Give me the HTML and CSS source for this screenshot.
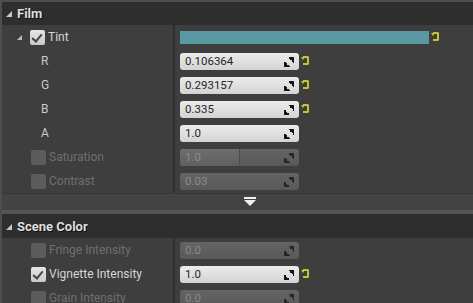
FILE: index.html
```html
<!DOCTYPE html>
<html lang="en">
<head>
    <meta charset="UTF-8">
    <title>Details - Post Process</title>
    <link rel="stylesheet" href="styles.css">
</head>
<body>

<div class="panel">

    <!-- Film -->
    <div class="category">
        <div class="cat-header"><span class="arrow"></span>Film</div>
        <div class="row">
            <div class="name"><span class="arrow small"></span><span class="check on"></span><span class="label">Tint</span></div>
            <div class="value"><div class="swatch"></div><span class="reset"></span></div>
        </div>
        <div class="row">
            <div class="name"><span class="label sub">R</span></div>
            <div class="value"><div class="num"><span class="txt">0.106364</span><span class="spin"></span></div><span class="reset"></span></div>
        </div>
        <div class="row">
            <div class="name"><span class="label sub">G</span></div>
            <div class="value"><div class="num"><span class="txt">0.293157</span><span class="spin"></span></div><span class="reset"></span></div>
        </div>
        <div class="row">
            <div class="name"><span class="label sub">B</span></div>
            <div class="value"><div class="num"><span class="txt">0.335</span><span class="spin"></span></div><span class="reset"></span></div>
        </div>
        <div class="row">
            <div class="name"><span class="label sub">A</span></div>
            <div class="value"><div class="num"><span class="txt">1.0</span><span class="spin"></span></div></div>
        </div>
        <div class="row">
            <div class="name indent"><span class="check"></span><span class="label off">Saturation</span></div>
            <div class="value"><div class="num off"><span class="fill" style="width: 59px"></span><span class="txt">1.0</span><span class="spin"></span></div></div>
        </div>
        <div class="row">
            <div class="name indent"><span class="check"></span><span class="label off">Contrast</span></div>
            <div class="value"><div class="num off"><span class="txt">0.03</span><span class="spin"></span></div></div>
        </div>
        <div class="expander"><span class="more"></span></div>
    </div>

    <!-- Scene Color -->
    <div class="category second">
        <div class="cat-header"><span class="arrow"></span>Scene Color</div>
        <div class="row">
            <div class="name indent"><span class="check"></span><span class="label off">Fringe Intensity</span></div>
            <div class="value"><div class="num off"><span class="txt">0.0</span><span class="spin"></span></div></div>
        </div>
        <div class="row">
            <div class="name indent"><span class="check on"></span><span class="label">Vignette Intensity</span></div>
            <div class="value"><div class="num"><span class="txt">1.0</span><span class="spin"></span></div><span class="reset"></span></div>
        </div>
        <div class="row">
            <div class="name indent"><span class="check"></span><span class="label off">Grain Intensity</span></div>
            <div class="value"><div class="num off"><span class="txt">0.0</span><span class="spin"></span></div></div>
        </div>
    </div>

</div>

</body>
</html>
```

FILE: styles.css
```css
body {
    margin: 0;
    padding: 0;
    background-color: #3d3d3d;
    font-family: Roboto, "Liberation Sans", sans-serif;
    overflow: hidden;
}

.panel {
    width: 473px;
    height: 303px;
    border-left: 2px solid #4e4e4e;
    border-top: 2px solid #4e4e4e;
    box-sizing: border-box;
    overflow: hidden;
}

.cat-header {
    height: 23px;
    background-color: #2e2e2e;
    color: #dedede;
    font-size: 13px;
    font-weight: bold;
    display: flex;
    align-items: center;
    padding-left: 4px;
    text-shadow: 1px 1px 0 #111;
}

.second {
    border-top: 4px solid #555555;
}

.second .cat-header {
    height: 24px;
}

.arrow {
    width: 0;
    height: 0;
    border-left: 6px solid transparent;
    border-bottom: 6px solid #c8c8c8;
    margin-right: 5px;
    margin-top: 1px;
}

.arrow.small {
    border-left-width: 5px;
    border-bottom-width: 5px;
    border-bottom-color: #bdbdbd;
    margin-left: 15px;
    margin-right: 8px;
}

.row {
    display: flex;
    height: 24px;
    background-color: #3e3e3e;
}

.name {
    width: 173px;
    box-sizing: border-box;
    flex-shrink: 0;
    display: flex;
    align-items: center;
    border-right: 2px solid #2f2f2f;
    font-size: 12px;
}

.name.indent {
    padding-left: 29px;
}

.label {
    color: #d6d6d6;
}

.label.sub {
    margin-left: 39px;
    color: #c9c9c9;
}

.label.off {
    color: #6f6f6f;
}

.check {
    width: 15px;
    height: 15px;
    border-radius: 2px;
    background-color: #5c5c5c;
    margin-right: 3px;
    position: relative;
}

.check.on {
    background: linear-gradient(#e6e6e6, #c9c9c9);
}

.check.on::after {
    content: "";
    position: absolute;
    left: 4px;
    top: 2px;
    width: 4px;
    height: 8px;
    border-right: 2px solid #444;
    border-bottom: 2px solid #444;
    transform: rotate(40deg);
}

.value {
    flex: 1;
    display: flex;
    align-items: center;
    padding-left: 5px;
}

.swatch {
    width: 249px;
    height: 13px;
    background-color: #5a98a3;
}

.num {
    width: 119px;
    height: 17px;
    box-sizing: border-box;
    border-radius: 3px;
    background: linear-gradient(#ececec, #d3d3d3);
    color: #262626;
    font-size: 11.5px;
    line-height: 17px;
    padding-left: 5px;
    position: relative;
    overflow: hidden;
}

.num.off {
    background: linear-gradient(#646464, #595959);
    color: #8a8a8a;
}

.txt {
    position: relative;
}

.fill {
    position: absolute;
    left: 0;
    top: 0;
    bottom: 0;
    border-right: 1px solid #4c4c4c;
    background: linear-gradient(#6e6e6e, #5f5f5f);
}

.spin {
    position: absolute;
    right: 5px;
    top: 4px;
    width: 10px;
    height: 10px;
    background:
        linear-gradient(to bottom left, #151515 50%, transparent 50%) right top / 6px 6px no-repeat,
        linear-gradient(to top right, #151515 50%, transparent 50%) left bottom / 6px 6px no-repeat;
}

.num.off .spin {
    background:
        linear-gradient(to bottom left, #262626 50%, transparent 50%) right top / 6px 6px no-repeat,
        linear-gradient(to top right, #262626 50%, transparent 50%) left bottom / 6px 6px no-repeat;
}

.reset {
    width: 4px;
    height: 5px;
    margin-left: 4px;
    margin-top: -2px;
    border: 2px solid #c2c62c;
    border-left: none;
    border-radius: 0 2px 2px 0;
    position: relative;
}

.reset::before {
    content: "";
    position: absolute;
    left: -2px;
    top: -1px;
    width: 0;
    height: 0;
    border-left: 2px solid transparent;
    border-right: 2px solid transparent;
    border-top: 3px solid #c2c62c;
}

.expander {
    height: 17px;
    background-color: #434343;
    border-top: 1px solid #363636;
    box-sizing: border-box;
    display: flex;
    padding-left: 242px;
    padding-top: 3px;
}

.more {
    width: 0;
    height: 0;
    border-left: 6px solid transparent;
    border-right: 6px solid transparent;
    border-top: 6px solid #f0f0f0;
    margin-top: 3px;
    position: relative;
}

.more::before {
    content: "";
    position: absolute;
    left: -6px;
    top: -9px;
    width: 12px;
    height: 2px;
    background-color: #f0f0f0;
}
```
